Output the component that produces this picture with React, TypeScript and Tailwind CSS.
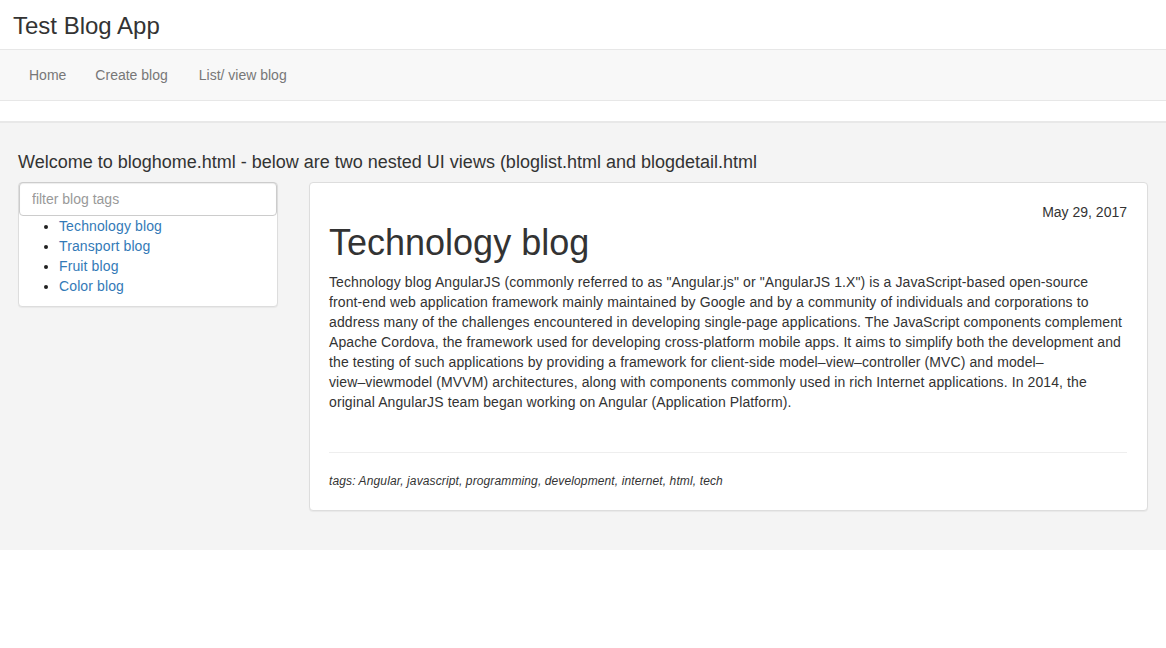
import React from 'react';

const blogs = ['Technology blog', 'Transport blog', 'Fruit blog', 'Color blog'];

const navLinks = [
  { label: 'Home', cls: 'pl-[15px] pr-[14px]' },
  { label: 'Create blog', cls: 'pl-[15px] pr-[16px]' },
  { label: 'List/ view blog', cls: 'px-[15px]' },
];

// lines broken the way the original page wraps them
const bodyLines = [
  'Technology blog AngularJS (commonly referred to as "Angular.js" or "AngularJS 1.X") is a JavaScript-based open-source',
  'front-end web application framework mainly maintained by Google and by a community of individuals and corporations to',
  'address many of the challenges encountered in developing single-page applications. The JavaScript components complement',
  'Apache Cordova, the framework used for developing cross-platform mobile apps. It aims to simplify both the development and',
  'the testing of such applications by providing a framework for client-side model–view–controller (MVC) and model–',
  'view–viewmodel (MVVM) architectures, along with components commonly used in rich Internet applications. In 2014, the',
  'original AngularJS team began working on Angular (Application Platform).',
];

export default function App() {
  return (
    <div className="min-h-[648px] bg-white text-[14px] leading-[20px] text-[#333] font-['Liberation_Sans',Arial,sans-serif]">
      {/* header */}
      <div className="h-[49px] px-[13px] flex items-center">
        <h1 className="text-[24px] leading-[26px] text-[#333] mt-[2px]">Test Blog App</h1>
      </div>

      {/* navbar */}
      <nav className="h-[52px] bg-[#f8f8f8] border-y border-[#e7e7e7] flex items-center px-[14px]">
        {navLinks.map((l) => (
          <a key={l.label} href="#" className={`${l.cls} text-[#777] hover:text-[#333]`}>
            {l.label}
          </a>
        ))}
      </nav>

      <div className="h-[20px]" />

      {/* main area */}
      <div className="bg-[#f4f4f4] border-t-2 border-[#e8e8e8] pt-[28px] pb-[39px] px-[18px]">
        <h2 className="text-[18px] leading-[22px] text-[#333] mb-[9px]">
          Welcome to bloghome.html - below are two nested UI views (bloglist.html and blogdetail.html
        </h2>

        <div className="flex items-start gap-[31px]">
          {/* bloglist */}
          <div className="w-[260px] shrink-0 bg-white border border-[#ddd] rounded-[4px] shadow-[0_1px_1px_rgba(0,0,0,0.05)]">
            <input
              type="text"
              placeholder="filter blog tags"
              className="block w-full h-[34px] -mt-px px-[12px] border border-[#ccc] rounded-[4px] text-[14px] text-[#555] placeholder:text-[#999] shadow-[inset_0_1px_1px_rgba(0,0,0,0.075)] outline-none"
            />
            <ul className="list-disc pl-[40px] mb-[10px] tracking-[0.12px]">
              {blogs.map((b) => (
                <li key={b} className="marker:text-[#222]">
                  <a href="#" className="text-[#337ab7] hover:underline">
                    {b}
                  </a>
                </li>
              ))}
            </ul>
          </div>

          {/* blogdetail */}
          <div className="flex-1 bg-white border border-[#ddd] rounded-[4px] shadow-[0_1px_1px_rgba(0,0,0,0.05)] pt-[19px] pl-[19px] pr-[20px] pb-[20px]">
            <div className="text-right">May 29, 2017</div>
            <h1 className="text-[36px] leading-[40px] mt-[1px] mb-[9px] text-[#333]">Technology blog</h1>
            <p className="tracking-[0.1px]">
              {bodyLines.map((line, i) => (
                <span key={i} className="block whitespace-nowrap">
                  {line}
                </span>
              ))}
            </p>
            <hr className="mt-[40px] mb-[20px] border-t border-[#eee]" />
            <div className="text-[12px] leading-[17px] italic tracking-[0.12px]">
              tags: Angular, javascript, programming, development, internet, html, tech
            </div>
          </div>
        </div>
      </div>
    </div>
  );
}
